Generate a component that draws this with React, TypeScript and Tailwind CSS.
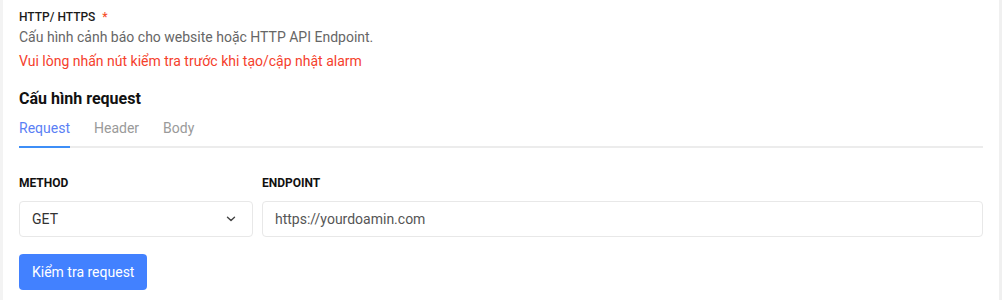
import React, { useState } from 'react';

const tabs = ['Request', 'Header', 'Body'];

function App() {
    const [active, setActive] = useState<string>('Request');
    const [method, setMethod] = useState<string>('GET');
    const [endpoint, setEndpoint] = useState<string>('');

    return (
        <div className="w-[1002px] h-[300px] flex bg-white overflow-hidden" style={{ fontFamily: 'Roboto, "Noto Sans", sans-serif' }}>
            <div className="w-[3px] bg-[#f3f3f3]"></div>
            <div className="flex-1 px-4 pt-2">
                <div className="text-[12px] leading-[18px] font-medium text-[#1a1a1a]">
                    HTTP/ HTTPS <span className="ml-1 text-[#f5502c]">*</span>
                </div>
                <div className="mt-[1px] text-[14px] leading-5 text-[#666666]">
                    Cấu hình cảnh báo cho website hoặc HTTP API Endpoint.
                </div>
                <div className="mt-1 text-[14px] leading-5 text-[#f5402c]">
                    Vui lòng nhấn nút kiểm tra trước khi tạo/cập nhật alarm
                </div>
                <div className="mt-4 text-[16px] leading-6 font-bold text-[#111111]">
                    Cấu hình request
                </div>
                <div className="mt-[7px] flex border-b-2 border-[#ececec]">
                    {tabs.map((t) => (
                        <button
                            key={t}
                            onClick={() => { setActive(t) }}
                            className={
                                t === active
                                    ? 'mr-6 pb-2 -mb-[2px] border-b-2 border-[#3e8ef7] text-[14px] leading-5 text-[#5b7ff5]'
                                    : 'mr-6 pb-2 -mb-[2px] border-b-2 border-transparent text-[14px] leading-5 text-[#9a9a9a]'
                            }
                        >
                            {t}
                        </button>
                    ))}
                </div>
                <div className="mt-[27px] flex gap-[9px]">
                    <div className="w-[234px]">
                        <div className="text-[12px] leading-4 font-bold text-[#111111]">METHOD</div>
                        <div className="mt-[10px] h-9 flex items-center justify-between rounded border border-[#e8e8e8] pl-3 pr-4">
                            <span className="text-[14px] text-[#333333]">{method}</span>
                            <svg width="10" height="6" viewBox="0 0 10 6" fill="none" onClick={() => { setMethod(method === 'GET' ? 'POST' : 'GET') }}>
                                <path d="M1.5 1.2L5 4.6L8.5 1.2" stroke="#444" strokeWidth="1.4" strokeLinecap="round" strokeLinejoin="round" />
                            </svg>
                        </div>
                    </div>
                    <div className="flex-1">
                        <div className="text-[12px] leading-4 font-bold text-[#111111]">ENDPOINT</div>
                        <input
                            value={endpoint}
                            onChange={(e) => { setEndpoint(e.target.value) }}
                            placeholder="https://yourdoamin.com"
                            className="mt-[10px] w-full h-9 rounded border border-[#e8e8e8] px-3 text-[14px] text-[#333333] placeholder:text-[#555555] outline-none"
                        />
                    </div>
                </div>
                <button className="mt-[17px] h-9 px-[13px] rounded bg-[#4281ff] text-white text-[14px]">
                    Kiểm tra request
                </button>
            </div>
            <div className="w-[3px] bg-[#f0f0f0]"></div>
        </div>
    );
}

export default App;
